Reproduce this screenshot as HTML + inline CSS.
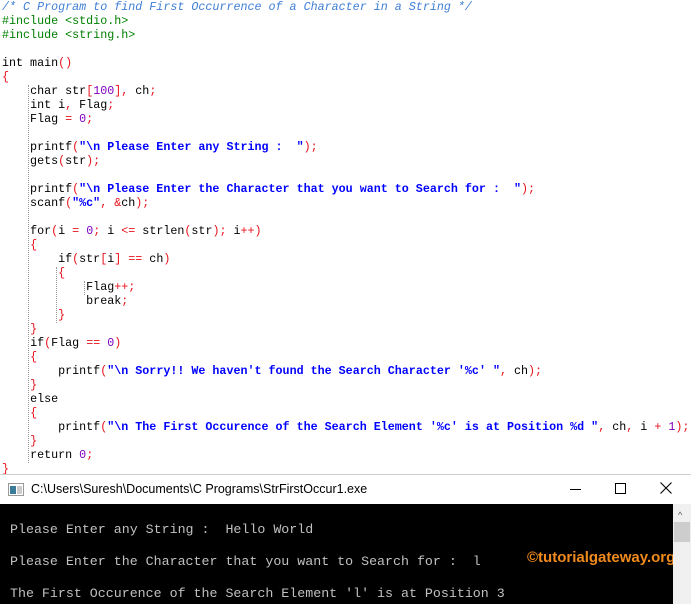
<!DOCTYPE html>
<html><head><meta charset="utf-8"><style>
body{margin:0;width:691px;height:604px;overflow:hidden;background:#fff;position:relative;font-family:"Liberation Mono",monospace}
#code{position:absolute;left:2px;top:0px;font-size:11.7px;line-height:14px;white-space:pre;color:#000}
.c{color:#3f7fd6;font-style:italic}
.p{color:#008000}
.o{color:#e8121c}
.s{color:#0000ff;font-weight:bold}
.n{color:#8000c0}
.k{}
.g{position:absolute;border-left:1px dotted #999}
#sep{position:absolute;left:0;top:474px;width:691px;height:1px;background:#ccc}
#title{position:absolute;left:0;top:475px;width:691px;height:29px;background:#fff;font-family:"Liberation Sans",sans-serif;font-size:12.5px}
#con{position:absolute;left:0;top:504px;width:691px;height:100px;background:#000;color:#c0c0c0;font-size:13.3px;white-space:pre}
#con div{position:absolute;left:10px}
#sb{position:absolute;left:673px;top:504px;width:18px;height:100px;background:#f0f0f0}
</style></head><body>
<div class="g" style="left:28px;top:85px;height:378px"></div>
<div class="g" style="left:56px;top:267px;height:56px"></div>
<div class="g" style="left:84px;top:281px;height:14px"></div>
<div id="code"><span class="c">/* C Program to find First Occurrence of a Character in a String */</span>
<span class="p">#include &lt;stdio.h&gt;</span>
<span class="p">#include &lt;string.h&gt;</span>

<span class="k">int</span> main<span class="o">()</span>
<span class="o">{</span>
    <span class="k">char</span> str<span class="o">[</span><span class="n">100</span><span class="o">],</span> ch<span class="o">;</span>
    <span class="k">int</span> i<span class="o">,</span> Flag<span class="o">;</span>
    Flag <span class="o">=</span> <span class="n">0</span><span class="o">;</span>

    printf<span class="o">(</span><span class="s">"\n Please Enter any String :  "</span><span class="o">);</span>
    gets<span class="o">(</span>str<span class="o">);</span>

    printf<span class="o">(</span><span class="s">"\n Please Enter the Character that you want to Search for :  "</span><span class="o">);</span>
    scanf<span class="o">(</span><span class="s">"%c"</span><span class="o">,</span> <span class="o">&amp;</span>ch<span class="o">);</span>

    <span class="k">for</span><span class="o">(</span>i <span class="o">=</span> <span class="n">0</span><span class="o">;</span> i <span class="o">&lt;=</span> strlen<span class="o">(</span>str<span class="o">);</span> i<span class="o">++)</span>
    <span class="o">{</span>
        <span class="k">if</span><span class="o">(</span>str<span class="o">[</span>i<span class="o">]</span> <span class="o">==</span> ch<span class="o">)</span>
        <span class="o">{</span>
            Flag<span class="o">++;</span>
            <span class="k">break</span><span class="o">;</span>
        <span class="o">}</span>
    <span class="o">}</span>
    <span class="k">if</span><span class="o">(</span>Flag <span class="o">==</span> <span class="n">0</span><span class="o">)</span>
    <span class="o">{</span>
        printf<span class="o">(</span><span class="s">"\n Sorry!! We haven't found the Search Character '%c' "</span><span class="o">,</span> ch<span class="o">);</span>
    <span class="o">}</span>
    <span class="k">else</span>
    <span class="o">{</span>
        printf<span class="o">(</span><span class="s">"\n The First Occurence of the Search Element '%c' is at Position %d "</span><span class="o">,</span> ch<span class="o">,</span> i <span class="o">+</span> <span class="n">1</span><span class="o">);</span>
    <span class="o">}</span>
    <span class="k">return</span> <span class="n">0</span><span class="o">;</span>
<span class="o">}</span></div>
<div id="sep"></div>
<div id="title">
<svg style="position:absolute;left:8px;top:8px" width="16" height="13"><rect x="0.5" y="0.5" width="15" height="12" fill="#fff" stroke="#999"/><rect x="2" y="3" width="6" height="8" fill="#3a7a9a"/><rect x="9" y="3" width="5" height="8" fill="#ccc"/></svg>
<span style="position:absolute;left:31px;top:7px">C:\Users\Suresh\Documents\C Programs\StrFirstOccur1.exe</span>
<div style="position:absolute;left:570px;top:14px;width:11px;height:1px;background:#000"></div>
<div style="position:absolute;left:615px;top:8px;width:9px;height:9px;border:1px solid #000"></div>
<svg style="position:absolute;left:660px;top:7px" width="12" height="12"><path d="M0.5 0.5L11.5 11.5M11.5 0.5L0.5 11.5" stroke="#000" stroke-width="1.1"/></svg>
</div>
<div id="con">
<div style="top:18px">Please Enter any String :  Hello World</div>
<div style="top:50px">Please Enter the Character that you want to Search for :  l</div>
<div style="top:82px">The First Occurence of the Search Element 'l' is at Position 3</div>
<div style="top:45px;left:527px;color:#f08a1c;font-family:'Liberation Sans',sans-serif;font-weight:bold;font-size:15px">©tutorialgateway.org</div>
</div>
<div id="sb"><div style="position:absolute;left:5px;top:6px;font-family:'Liberation Sans';font-size:9px;color:#555">^</div><div style="position:absolute;left:1px;top:18px;width:16px;height:20px;background:#cdcdcd"></div></div>
</body></html>
